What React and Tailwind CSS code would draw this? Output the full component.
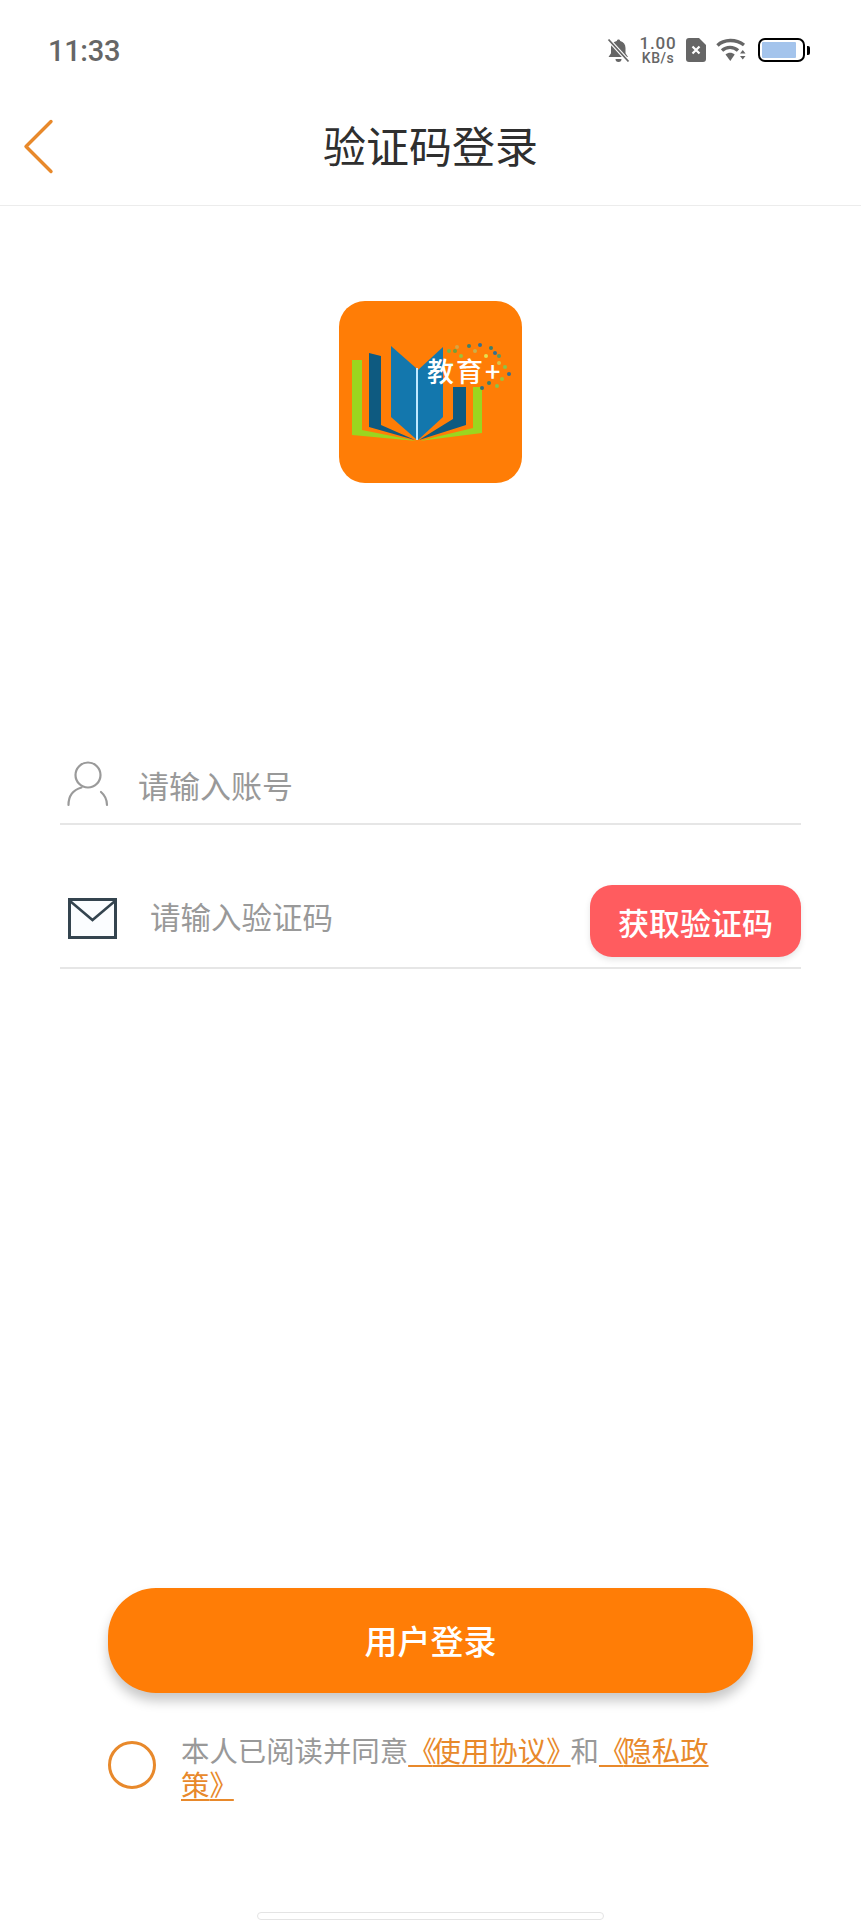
import React from 'react'

const cjk = "font-['Noto_Sans_CJK_SC','Noto_Sans',sans-serif]"

const BellOff = () => (
  <svg width="23" height="25" viewBox="0 0 23 25" className="shrink-0">
    <path d="M11.500 1.500c1 0 1.600.7 1.700 1.600 3.400.8 5.300 3.600 5.300 7v5.200l2.500 3.700H1.500L4 15.300V10.100c0-3.400 1.900-6.200 5.800-7 .1-.9.7-1.600 1.700-1.600z" fill="#666" />
    <path d="M8.500 21h6a3 3 0 0 1-6 0z" fill="#666" />
    <path d="M1.500 1.500 21.500 23.500" stroke="#fff" strokeWidth="4" />
    <path d="M1.500 1.500 21.500 23.500" stroke="#666" strokeWidth="1.800" />
  </svg>
)

const SimX = () => (
  <svg width="20" height="24" viewBox="0 0 20 24" className="shrink-0">
    <path d="M3 0h10l7 7v14a3 3 0 0 1-3 3H3a3 3 0 0 1-3-3V3a3 3 0 0 1 3-3z" fill="#666" />
    <path d="M6.500 8.500l7 7M13.500 8.500l-7 7" stroke="#fff" strokeWidth="2.200" />
  </svg>
)

const Wifi = () => (
  <svg width="30" height="24" viewBox="0 0 30 24" className="shrink-0">
    <g fill="none" stroke="#666" strokeWidth="3.400">
      <path d="M1.500 7.500C8 1 20 1 28 7" />
      <path d="M6 12.500c4.500-4.200 11.500-4.200 16 0" />
    </g>
    <path d="M9.500 16.500c2.700-2.500 6.500-2.500 9.200 0L14.300 23z" fill="#666" />
    <path d="M24 15.500h5.500l-2.750-3.500zM24 18h5.500l-2.750 3.500z" fill="#666" />
  </svg>
)

const Battery = () => (
  <div className="flex items-center gap-[2px] shrink-0">
    <div className="w-[47px] h-[24px] rounded-[7px] border-[2.500px] border-black p-[2px] flex">
      <div className="w-[34px] bg-[#a4c4ec] rounded-[1px]" />
    </div>
    <div className="w-[3px] h-[9px] bg-black rounded-r-[2px]" />
  </div>
)

const StatusBar = () => (
  <div className="h-[100px] pl-[48px] pr-[51px] flex items-center justify-between">
    <span className="pt-[3px] font-['Roboto',sans-serif] text-[29px] text-[#666] font-medium tracking-[-0.3px]">11:33</span>
    <div className="flex items-center">
      <BellOff />
      <div className="ml-[9px] w-[38px] flex flex-col items-center text-[#666] font-['Roboto',sans-serif] font-medium leading-none">
        <span className="text-[17px] h-[15px] tracking-[0.8px]">1.00</span>
        <span className="text-[14px] mt-[1px] tracking-[0.5px]">KB/s</span>
      </div>
      <div className="ml-[9px]"><SimX /></div>
      <div className="ml-[10px]"><Wifi /></div>
      <div className="ml-[12px]"><Battery /></div>
    </div>
  </div>
)

const Header = () => (
  <div className="relative h-[106px] border-b border-[#ececec] flex items-center justify-center">
    <svg width="32" height="56" viewBox="0 0 32 56" className="absolute left-[23px] top-[19px]">
      <path d="M28 2.500 3 27.500l25 25" fill="none" stroke="#e8892b" strokeWidth="3.400" strokeLinecap="round" strokeLinejoin="round" />
    </svg>
    <h1 className={`${cjk} text-[43px] font-normal text-[#2f2f2f] leading-none pb-[17px]`}>验证码登录</h1>
  </div>
)

const dots = [
  [110, 50, '#7ab648'], [118, 46, '#d9a441'], [130, 45, '#3f7f6b'], [141, 44, '#356f8f'], [152, 47, '#3f7f6b'],
  [160, 55, '#5a9a62'], [170, 73, '#356f8f'], [160, 62, '#d9c34a'], [147, 55, '#e6e04f'], [122, 55, '#9cc23c'],
  [150, 82, '#3f7f6b'], [158, 85, '#8bc34a'], [163, 78, '#9cc23c'], [143, 87, '#2f6f7f'], [112, 64, '#8bc34a'],
  [116, 50, '#6f9f3c'], [136, 50, '#c9b04a'], [156, 52, '#356f8f'], [166, 66, '#8bc34a'], [155, 72, '#d98a3c'],
]

const Logo = () => (
  <div className="relative w-[183px] h-[182px] rounded-[26px] bg-[#ff7d06] overflow-hidden">
    <svg width="183" height="182" viewBox="0 0 183 182">
      <polygon points="13,59 23,59 23,129 78,140 13,134" fill="#9bd61f" />
      <polygon points="134,86 143,86 143,132 80,140 134,127" fill="#9bd61f" />
      <polygon points="30,52 42,55 42,124 76,139 30,126" fill="#0e5a80" />
      <polygon points="114,86 127,86 127,124 80,139 114,118" fill="#0e5a80" />
      <polygon points="52,45 77,67 77,138 52,116" fill="#1377ad" />
      <polygon points="79,69 104,46 104,116 79,139" fill="#1377ad" />
      <rect x="77" y="67" width="2" height="72" fill="#bfe8ff" />
      {dots.map(([x, y, c], i) => (
        <circle key={i} cx={x} cy={y} r="2" fill={c} />
      ))}
    </svg>
    <span className={`absolute left-[88px] top-[52px] ${cjk} text-[27px] font-medium leading-[36px] tracking-[2px] text-white whitespace-nowrap`}>教育+</span>
  </div>
)

const UserIcon = () => (
  <svg width="42" height="46" viewBox="0 0 42 46" className="shrink-0">
    <g fill="none" stroke="#9a9a9a" strokeWidth="2.200" strokeLinecap="round">
      <circle cx="21" cy="14" r="12.500" />
      <path d="M1.500 44c0-10 6-15.500 13-17.500" />
      <path d="M34 31c3.500 3 6 7.500 6 13" />
    </g>
  </svg>
)

const MailIcon = () => (
  <svg width="49" height="41" viewBox="0 0 49 41" className="shrink-0">
    <rect x="1.500" y="1.500" width="46" height="38" fill="#fbfdff" stroke="#34444f" strokeWidth="3" />
    <path d="M2 3l22.500 19L47 3" fill="none" stroke="#34444f" strokeWidth="2.500" />
  </svg>
)

const LoginForm = () => (
  <div className="mt-[276px] ml-[60px] w-[741px]">
    <div className="h-[66px] pl-[7px] pb-[14px] flex items-center border-b-2 border-[#e6e6e6]">
      <UserIcon />
      <span className={`ml-[29px] ${cjk} text-[31px] text-[#999] leading-none`}>请输入账号</span>
    </div>
    <div className="mt-[60px] h-[84px] pl-[8px] flex items-start border-b-2 border-[#e6e6e6]">
      <div className="mt-[13px]"><MailIcon /></div>
      <span className={`ml-[33px] mt-[16px] ${cjk} text-[30.500px] text-[#999] leading-none`}>请输入验证码</span>
      <button className={`ml-auto w-[211px] h-[72px] rounded-[22px] bg-[#ff5c5f] shadow-[0_3px_6px_rgba(0,0,0,0.1)] ${cjk} text-[31px] font-medium text-white leading-none`}>
        获取验证码
      </button>
    </div>
  </div>
)

// the brackets sit tighter than a full-width glyph in the original
const Bracket = ({ children }) => <span className="tracking-[-4px]">{children}</span>

const Agreement = () => (
  <div className="mt-[40px] ml-[108px] w-[610px] flex items-start">
    <div className="mt-[8px] w-[48px] h-[48px] rounded-full border-[3px] border-[#e8892b] shrink-0" />
    <p className={`ml-[25px] ${cjk} text-[28.400px] leading-[34px] text-[#999]`}>
      本人已阅读并同意
      <span className="text-[#e8892b] underline underline-offset-[3px]"><Bracket>《</Bracket>使用协议<Bracket>》</Bracket></span>
      和
      <span className="text-[#e8892b] underline underline-offset-[3px]"><Bracket>《</Bracket>隐私政策<Bracket>》</Bracket></span>
    </p>
  </div>
)

export default function App() {
  return (
    <div className="w-[861px] h-[1920px] bg-white flex flex-col overflow-hidden">
      <StatusBar />
      <Header />
      <div className="mt-[95px] flex justify-center">
        <Logo />
      </div>
      <LoginForm />
      <button className={`mt-[619px] ml-[108px] w-[645px] h-[105px] rounded-[48px] bg-[#ff7d06] shadow-[0_8px_12px_rgba(0,0,0,0.22)] ${cjk} text-[33px] font-medium text-white leading-none`}>
        用户登录
      </button>
      <Agreement />
      <div className="mt-auto mx-auto w-[347px] h-[8px] rounded-[4px] border border-[#e4e4e4]" />
    </div>
  )
}
